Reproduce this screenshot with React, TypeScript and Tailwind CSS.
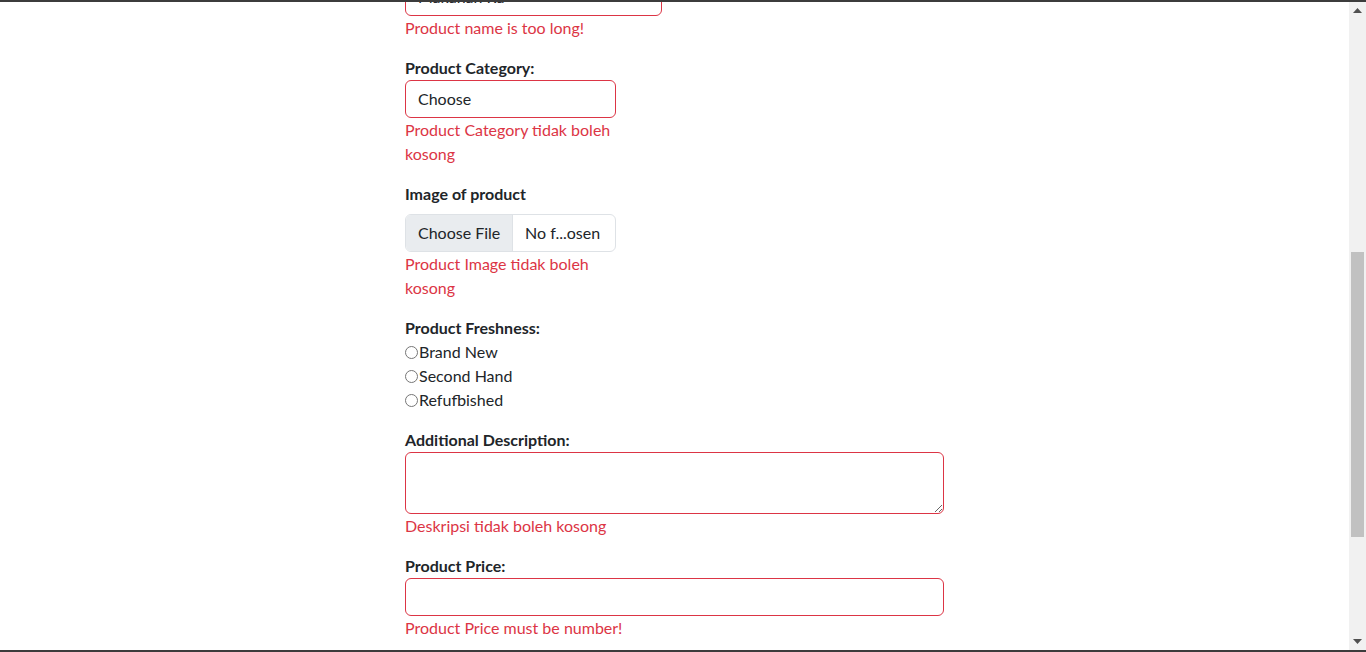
import React from "react";

const font = { fontFamily: 'Lato, "Noto Sans", "Liberation Sans", sans-serif' };

function Err({ children }: { children: React.ReactNode }) {
  return <div className="text-[16px] leading-[24px] text-[#dc3545] whitespace-nowrap">{children}</div>;
}

function Label({ children, mb = false }: { children: React.ReactNode; mb?: boolean }) {
  return (
    <div className={`text-[16px] leading-[24px] font-bold text-[#212529] whitespace-nowrap ${mb ? "mb-2" : ""}`}>
      {children}
    </div>
  );
}

function Radio({ label }: { label: string }) {
  return (
    <div className="flex items-center h-[24px] text-[16px] leading-[24px] text-[#212529] whitespace-nowrap">
      <span className="w-[13px] h-[13px] rounded-full border border-[#767676] bg-white mr-[1px] shrink-0" />
      <span>{label}</span>
    </div>
  );
}

export default function App() {
  return (
    <div className="w-[1366px] h-[652px] flex flex-col bg-white overflow-hidden" style={font}>
      <div className="h-[2px] bg-[#3c3c3c] shrink-0" />
      <div className="flex flex-1 min-h-0">
        <div className="flex-1 overflow-hidden">
          <div className="w-[539px] mx-auto flex flex-col">
            <div className="mt-[-24px] w-[257px] h-[38px] border border-[#dc3545] rounded-[6px] px-3 flex items-center text-[16px] text-[#212529] whitespace-nowrap">
              Makanan Ra
            </div>
            <div className="mb-4">
              <Err>Product name is too long!</Err>
            </div>

            <Label>Product Category:</Label>
            <div className="w-[211px] h-[38px] border border-[#dc3545] rounded-[6px] px-3 flex items-center text-[16px] text-[#212529] whitespace-nowrap">
              Choose
            </div>
            <div className="mb-4 w-[211px]">
              <Err>
                Product Category tidak boleh
                <br />
                kosong
              </Err>
            </div>

            <Label mb>Image of product</Label>
            <div className="w-[211px] h-[38px] border border-[#dee2e6] rounded-[6px] flex overflow-hidden text-[16px] text-[#212529] whitespace-nowrap">
              <div className="bg-[#e9ecef] border-r border-[#dee2e6] px-3 flex items-center w-[107px] shrink-0">Choose File</div>
              <div className="px-3 flex items-center">No f...osen</div>
            </div>
            <div className="mb-4 w-[211px]">
              <Err>
                Product Image tidak boleh
                <br />
                kosong
              </Err>
            </div>

            <Label>Product Freshness:</Label>
            <div className="mb-4 flex flex-col">
              <Radio label="Brand New" />
              <Radio label="Second Hand" />
              <Radio label="Refufbished" />
            </div>

            <Label>Additional Description:</Label>
            <textarea
              className="block w-[539px] h-[62px] border border-[#dc3545] rounded-[6px] outline-none resize-y"
              style={font}
            />
            <div className="mb-4">
              <Err>Deskripsi tidak boleh kosong</Err>
            </div>

            <Label>Product Price:</Label>
            <div className="w-[539px] h-[38px] border border-[#dc3545] rounded-[6px]" />
            <Err>Product Price must be number!</Err>
          </div>
        </div>
        <div className="w-[17px] bg-[#f1f1f1] flex flex-col items-center shrink-0">
          <div className="h-[17px] w-full flex items-center justify-center">
            <svg width="9" height="5" viewBox="0 0 9 5"><path d="M0 5 L4.5 0 L9 5 Z" fill="#505050" /></svg>
          </div>
          <div className="h-[233px]" />
          <div className="w-[13px] h-[285px] bg-[#c1c1c1]" />
          <div className="flex-1" />
          <div className="h-[17px] w-full flex items-center justify-center">
            <svg width="9" height="5" viewBox="0 0 9 5"><path d="M0 0 L9 0 L4.5 5 Z" fill="#505050" /></svg>
          </div>
        </div>
      </div>
      <div className="h-[2px] bg-[#3c3c3c] shrink-0" />
    </div>
  );
}
